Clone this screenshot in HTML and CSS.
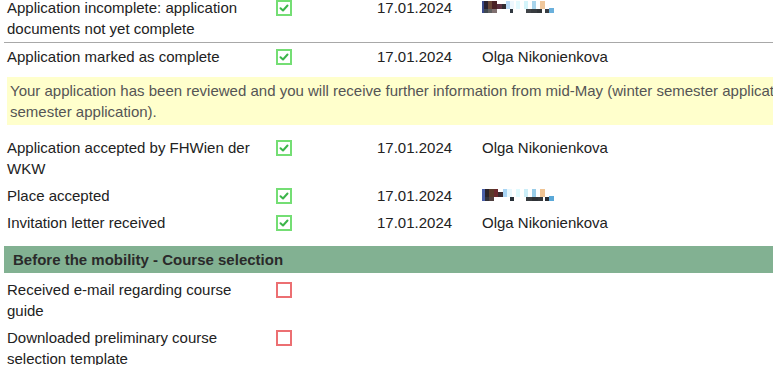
FILE: index.html
```html
<!DOCTYPE html>
<html lang="en">
<head>
    <meta charset="UTF-8">
    <meta name="viewport" content="width=device-width, initial-scale=1.0">
    <title>Mobility status</title>
    <link rel="stylesheet" href="styles.css">
</head>
<body>
    <div class="status-list">
        <div class="step step-last">
            <div class="label">Application incomplete: application documents not yet complete</div>
            <div class="check"><span class="box done"><svg viewBox="0 0 12 12"><path d="M2.5 6.2 L5 8.5 L9.5 3.5" /></svg></span></div>
            <div class="date">17.01.2024</div>
            <div class="name">
                <svg class="blur" viewBox="0 0 76 12" width="76" height="12">
                    <rect x="0" y="0" width="2" height="12" fill="#3a4a8a"/>
                    <rect x="2" y="0" width="4" height="8" fill="#2a2230"/>
                    <rect x="6" y="0" width="4" height="8" fill="#6a4838"/>
                    <rect x="10" y="0" width="5" height="8" fill="#4a2226"/>
                    <rect x="15" y="3" width="5" height="5" fill="#5a3040"/>
                    <rect x="20" y="3" width="4" height="5" fill="#302a30"/>
                    <rect x="24" y="0" width="4" height="8" fill="#b8d8f4"/>
                    <rect x="28" y="0" width="4" height="8" fill="#eef8fe"/>
                    <rect x="34" y="0" width="4" height="8" fill="#e4fafe"/>
                    <rect x="42" y="0" width="4" height="8" fill="#d4f4fa"/>
                    <rect x="50" y="0" width="4" height="8" fill="#a8d4ec"/>
                    <rect x="58" y="0" width="5" height="8" fill="#f0c89c"/>
                    <rect x="2" y="8" width="4" height="4" fill="#404850"/>
                    <rect x="6" y="8" width="4" height="4" fill="#606060"/>
                    <rect x="10" y="8" width="5" height="4" fill="#807070"/>
                    <rect x="28" y="8" width="3" height="4" fill="#303840"/>
                    <rect x="44" y="8" width="5" height="4" fill="#404448"/>
                    <rect x="49" y="8" width="6" height="4" fill="#383c40"/>
                    <rect x="55" y="8" width="5" height="4" fill="#303438"/>
                    <rect x="63" y="8" width="4" height="4" fill="#3a3e44"/>
                    <rect x="67" y="7" width="5" height="5" fill="#6ab0dc"/>
                </svg>
            </div>
        </div>
        <div class="step">
            <div class="label">Application marked as complete</div>
            <div class="check"><span class="box done"><svg viewBox="0 0 12 12"><path d="M2.5 6.2 L5 8.5 L9.5 3.5" /></svg></span></div>
            <div class="date">17.01.2024</div>
            <div class="name">Olga Nikonienkova</div>
        </div>
        <div class="note-row">
            <div class="note">Your application has been reviewed and you will receive further information from mid-May (winter semester application) or mid-November (summer semester application).</div>
        </div>
        <div class="step">
            <div class="label">Application accepted by FHWien der WKW</div>
            <div class="check"><span class="box done"><svg viewBox="0 0 12 12"><path d="M2.5 6.2 L5 8.5 L9.5 3.5" /></svg></span></div>
            <div class="date">17.01.2024</div>
            <div class="name">Olga Nikonienkova</div>
        </div>
        <div class="step">
            <div class="label">Place accepted</div>
            <div class="check"><span class="box done"><svg viewBox="0 0 12 12"><path d="M2.5 6.2 L5 8.5 L9.5 3.5" /></svg></span></div>
            <div class="date">17.01.2024</div>
            <div class="name">
                <svg class="blur" viewBox="0 0 76 12" width="76" height="12">
                    <rect x="0" y="0" width="3" height="12" fill="#4a60a8"/>
                    <rect x="3" y="0" width="4" height="8" fill="#2a2228"/>
                    <rect x="7" y="0" width="5" height="8" fill="#5a3a2a"/>
                    <rect x="12" y="0" width="4" height="8" fill="#6a2a2e"/>
                    <rect x="16" y="3" width="5" height="5" fill="#3a2a30"/>
                    <rect x="21" y="0" width="4" height="8" fill="#a8d4f4"/>
                    <rect x="25" y="0" width="5" height="8" fill="#e8f8fe"/>
                    <rect x="34" y="0" width="4" height="8" fill="#e0fafe"/>
                    <rect x="42" y="0" width="4" height="8" fill="#cceef8"/>
                    <rect x="50" y="0" width="4" height="8" fill="#98cce8"/>
                    <rect x="58" y="0" width="5" height="8" fill="#f0c494"/>
                    <rect x="3" y="8" width="4" height="4" fill="#303038"/>
                    <rect x="7" y="8" width="5" height="4" fill="#504040"/>
                    <rect x="28" y="8" width="4" height="4" fill="#283038"/>
                    <rect x="44" y="8" width="6" height="4" fill="#383c40"/>
                    <rect x="50" y="8" width="6" height="4" fill="#2e3236"/>
                    <rect x="56" y="8" width="5" height="4" fill="#34383c"/>
                    <rect x="63" y="8" width="4" height="4" fill="#2a2e34"/>
                    <rect x="67" y="7" width="5" height="5" fill="#5aa8d8"/>
                </svg>
            </div>
        </div>
        <div class="step">
            <div class="label">Invitation letter received</div>
            <div class="check"><span class="box done"><svg viewBox="0 0 12 12"><path d="M2.5 6.2 L5 8.5 L9.5 3.5" /></svg></span></div>
            <div class="date">17.01.2024</div>
            <div class="name">Olga Nikonienkova</div>
        </div>

        <div class="section-head">Before the mobility - Course selection</div>

        <div class="step">
            <div class="label">Received e-mail regarding course guide</div>
            <div class="check"><span class="box open"></span></div>
            <div class="date"></div>
            <div class="name"></div>
        </div>
        <div class="step">
            <div class="label">Downloaded preliminary course selection template</div>
            <div class="check"><span class="box open"></span></div>
            <div class="date"></div>
            <div class="name"></div>
        </div>
    </div>
</body>
</html>
```

FILE: styles.css
```css
body {
    margin: 0;
    overflow: hidden;
    font-family: "Liberation Sans", Arial, sans-serif;
    font-size: 15px;
    color: #222;
    background: #fff;
}
.status-list {
    width: 1000px;
    margin-top: -6px;
    padding-left: 4px;
}
.step {
    display: flex;
    padding: 3px 0;
    line-height: 21px;
}
.step-last {
    border-bottom: 1px solid #a8a8a8;
}
.label {
    width: 255px;
    padding-left: 3px;
    margin-right: 14px;
    flex-shrink: 0;
}
.check {
    width: 101px;
    flex-shrink: 0;
    padding-top: 3px;
}
.date {
    width: 105px;
    flex-shrink: 0;
}
.name {
    flex: 1;
}
.blur {
    display: block;
    margin-top: 4px;
}
.box {
    display: block;
    width: 16px;
    height: 16px;
    box-sizing: border-box;
    background: #fff;
}
.box svg {
    display: block;
    width: 12px;
    height: 12px;
}
.box svg path {
    fill: none;
    stroke: #3cb54a;
    stroke-width: 2;
    stroke-linecap: round;
    stroke-linejoin: round;
}
.done {
    border: 2px solid #74de74;
}
.open {
    border: 2px solid #ec6f72;
}
.note-row {
    padding: 3px;
}
.note {
    margin: 4px 0 6px;
    padding: 3px;
    line-height: 21px;
    background-color: #ffffcc;
    color: #555;
}
.section-head {
    margin: 10px 0 3px;
    height: 27px;
    line-height: 27px;
    padding-left: 9px;
    background-color: #82b192;
    color: #2a2a2a;
    font-weight: bold;
}
```
